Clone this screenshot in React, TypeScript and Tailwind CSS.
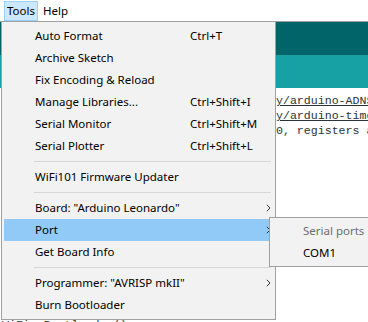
import React from "react";

type Item =
  | { sep: true }
  | { sep?: false; label: string; shortcut?: string; arrow?: boolean; active?: boolean };

const items: Item[] = [
  { label: "Auto Format", shortcut: "Ctrl+T" },
  { label: "Archive Sketch" },
  { label: "Fix Encoding & Reload" },
  { label: "Manage Libraries...", shortcut: "Ctrl+Shift+I" },
  { label: "Serial Monitor", shortcut: "Ctrl+Shift+M" },
  { label: "Serial Plotter", shortcut: "Ctrl+Shift+L" },
  { sep: true },
  { label: "WiFi101 Firmware Updater" },
  { sep: true },
  { label: 'Board: "Arduino Leonardo"', arrow: true },
  { label: "Port", arrow: true, active: true },
  { label: "Get Board Info" },
  { sep: true },
  { label: 'Programmer: "AVRISP mkII"', arrow: true },
  { label: "Burn Bootloader" },
];

function Chevron() {
  return (
    <svg width="5" height="8" viewBox="0 0 5 8" className="block">
      <path d="M0.8 0.8 L4 4 L0.8 7.2" fill="none" stroke="#333" strokeWidth="1" />
    </svg>
  );
}

export default function App() {
  return (
    <div className="relative w-[368px] h-[322px] overflow-hidden bg-white font-['Noto_Sans',sans-serif] text-[11.5px] text-black">
      {/* menubar */}
      <div className="flex h-[21px] items-stretch pt-px pl-[4px]">
        <div className="flex items-center px-[2px] w-[34px] bg-[#cce8ff] border border-[#99d1ff] leading-none">
          Tools
        </div>
        <div className="flex items-center pl-[5px] leading-none">Help</div>
      </div>
      <div className="h-px bg-[#a0a0a0]" />
      <div className="h-[33px] bg-[#006468]" />
      <div className="h-[33px] bg-[#17a1a5]" />
      <div className="pl-[276px] pt-[5px] font-['Liberation_Mono',monospace] text-[11.6px] leading-[15px] text-[#2b3438] whitespace-nowrap">
        <div className="underline">y/arduino-ADNS3080</div>
        <div className="underline">y/arduino-timer</div>
        <div>0, registers and</div>
      </div>
      <div className="mt-[179px] pl-[2px] font-['Liberation_Mono',monospace] text-[11.6px] leading-[15px] text-[#2b3438] whitespace-nowrap">
        WiFi. Bootloader();
      </div>

      {/* dropdown menu */}
      <div className="absolute left-px top-[21px] w-[275px] h-[299px] bg-[#f2f2f2] border border-[#a0a0a0] px-[2px] py-[3px]">
        {items.map((it, i) =>
          it.sep ? (
            <div key={i} className="h-[9px] flex items-center pl-[30px] pr-[2px]">
              <div className="h-px w-full bg-[#d7d7d7]" />
            </div>
          ) : (
            <div
              key={i}
              className={
                "h-[22px] flex items-center leading-[22px] " +
                (it.active ? "bg-[#91c9f7]" : "")
              }
            >
              <div className="w-[31px] shrink-0" />
              <div className="w-[155px] shrink-0 whitespace-nowrap">{it.label}</div>
              <div className="flex-1 whitespace-nowrap">{it.shortcut ?? ""}</div>
              <div className="w-[10px] shrink-0 flex items-center pl-[3px]">{it.arrow ? <Chevron /> : null}</div>
            </div>
          )
        )}
      </div>

      {/* submenu */}
      <div className="absolute left-[269px] top-[217px] w-[120px] h-[50px] bg-[#f2f2f2] border border-[#a0a0a0] pt-[2px]">
        <div className="h-[22px] flex items-center pl-[33px] text-[#6d6d6d] whitespace-nowrap">Serial ports</div>
        <div className="h-[22px] flex items-center pl-[33px] whitespace-nowrap">COM1</div>
      </div>
    </div>
  );
}
